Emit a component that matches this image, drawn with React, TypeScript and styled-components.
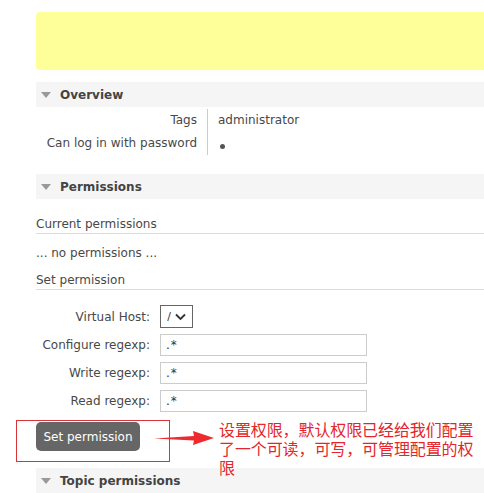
import React from "react";
import styled, { createGlobalStyle } from "styled-components";

const Global = createGlobalStyle`
  html, body { margin: 0; padding: 0; background: #fff; overflow: hidden; }
  body { font-family: "DejaVu Sans", Verdana, sans-serif; font-size: 12px; color: #484848; }
`;

const Page = styled.div`
  position: relative;
  width: 484px;
  height: 493px;
  overflow: hidden;
`;

const Main = styled.div`
  padding: 12px 0 0 36px;
  margin-right: -20px;
  display: flex;
  flex-direction: column;
`;

const Notice = styled.div`
  height: 58px;
  background: #ffff9a;
  border-radius: 4px;
`;

const SectionHeader = styled.div<{ $top: number }>`
  margin-top: ${(p) => p.$top}px;
  height: 25px;
  flex-shrink: 0;
  background: #f5f5f5;
  display: flex;
  align-items: center;
  gap: 9px;
  padding-left: 5px;
  font-weight: bold;
  font-size: 12px;
  color: #444;
`;

const Triangle = styled.span`
  width: 0;
  height: 0;
  border-left: 5.5px solid transparent;
  border-right: 5.5px solid transparent;
  border-top: 6px solid #999;
  margin-top: 1px;
`;

const Facts = styled.div`
  display: grid;
  grid-template-columns: 171px auto;
  padding: 2px 0 7px;
`;

const FactLabel = styled.div`
  text-align: right;
  padding: 2px 10px 3px 0;
  height: 18px;
  line-height: 18px;
`;

const FactValue = styled.div`
  border-left: 1px solid #ccc;
  padding: 2px 0 3px 10px;
  height: 18px;
  line-height: 18px;
  display: flex;
  align-items: center;
`;

const Dot = styled.span`
  width: 5px;
  height: 5px;
  border-radius: 50%;
  background: #555;
  margin: 6px 0 0 2px;
`;

const SubHeading = styled.div<{ $top: number }>`
  margin-top: ${(p) => p.$top}px;
  padding-bottom: 1px;
  line-height: 16px;
  border-bottom: 1px solid #ddd;
`;

const Plain = styled.div`
  margin-top: 10px;
  line-height: 18px;
`;

const Form = styled.div`
  margin-top: 15px;
  display: grid;
  grid-template-columns: 114px auto;
  column-gap: 10px;
  row-gap: 6px;
  align-items: center;
`;

const FormLabel = styled.label`
  text-align: right;
  line-height: 18px;
`;

const Select = styled.div`
  width: 33px;
  height: 23px;
  box-sizing: border-box;
  border: 1px solid #666;
  display: flex;
  align-items: center;
  justify-content: center;
  gap: 4px;
  color: #333;
  font-size: 11px;
`;

const Input = styled.div`
  width: 207px;
  height: 22px;
  box-sizing: border-box;
  border: 1px solid #ccc;
  padding-left: 5px;
  display: flex;
  align-items: center;
  color: #333;
  font-size: 12px;
  letter-spacing: 1px;
`;

const Button = styled.div`
  margin-top: 10px;
  align-self: flex-start;
  width: 104px;
  height: 29px;
  box-sizing: border-box;
  background: #666;
  color: #fff;
  border-radius: 5px;
  display: flex;
  align-items: center;
  justify-content: center;
  font-size: 12px;
`;

const RedBox = styled.div`
  position: absolute;
  left: 16px;
  top: 420px;
  width: 154px;
  height: 42px;
  border: 1px solid #d9343a;
  box-sizing: border-box;
`;

const Arrow = styled.svg`
  position: absolute;
  left: 154px;
  top: 428px;
`;

const Note = styled.div`
  position: absolute;
  left: 219px;
  top: 420px;
  width: 260px;
  font-family: "Noto Sans CJK SC", sans-serif;
  font-size: 16px;
  line-height: 19px;
  color: #e3262b;
  letter-spacing: -0.1px;
`;

export default function App() {
  return (
    <Page>
      <Global />
      <Main>
        <Notice />
        <SectionHeader $top={12}>
          <Triangle />
          Overview
        </SectionHeader>
        <Facts>
          <FactLabel>Tags</FactLabel>
          <FactValue>administrator</FactValue>
          <FactLabel>Can log in with password</FactLabel>
          <FactValue>
            <Dot />
          </FactValue>
        </Facts>
        <SectionHeader $top={12}>
          <Triangle />
          Permissions
        </SectionHeader>
        <SubHeading $top={17}>Current permissions</SubHeading>
        <Plain>... no permissions ...</Plain>
        <SubHeading $top={10}>Set permission</SubHeading>
        <Form>
          <FormLabel>Virtual Host:</FormLabel>
          <Select>
            <span>/</span>
            <svg width="11" height="8" viewBox="0 0 11 8">
              <path d="M1 1.5 L5.5 6 L10 1.5" fill="none" stroke="#333" strokeWidth="1.8" />
            </svg>
          </Select>
          <FormLabel>Configure regexp:</FormLabel>
          <Input>.*</Input>
          <FormLabel>Write regexp:</FormLabel>
          <Input>.*</Input>
          <FormLabel>Read regexp:</FormLabel>
          <Input>.*</Input>
        </Form>
        <Button>Set permission</Button>
        <SectionHeader $top={17}>
          <Triangle />
          Topic permissions
        </SectionHeader>
      </Main>
      <RedBox />
      <Arrow width="62" height="20" viewBox="0 0 62 20">
        <path d="M0 10.5 L40 8 L39 3 L60 10 L39 17 L40 12.5 Z" fill="#ee2a2e" />
      </Arrow>
      <Note>设置权限，默认权限已经给我们配置了一个可读，可写，可管理配置的权限</Note>
    </Page>
  );
}
